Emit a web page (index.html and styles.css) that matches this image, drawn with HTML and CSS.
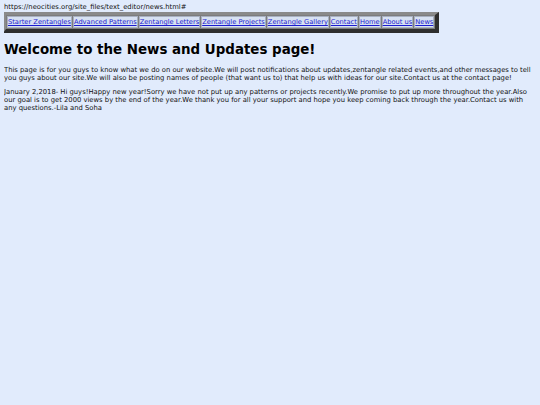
FILE: index.html
```html
<!DOCTYPE html>
<html>
<head>
<meta charset="utf-8">
<link rel="stylesheet" href="styles.css">
</head>
<body>
<div class="url">https://neocities.org/site_files/text_editor/news.html#</div>
<table class="nav">
<tr>
<td><a href="#">Starter Zentangles</a></td>
<td><a href="#">Advanced Patterns</a></td>
<td><a href="#">Zentangle Letters</a></td>
<td><a href="#">Zentangle Projects</a></td>
<td><a href="#">Zentangle Gallery</a></td>
<td><a href="#">Contact</a></td>
<td><a href="#">Home</a></td>
<td><a href="#">About us</a></td>
<td><a href="#">News</a></td>
</tr>
</table>
<h1 class="title">Welcome to the News and Updates page!</h1>
<p class="text">This page is for you guys to know what we do on our website.We will post notifications about updates,zentangle related events,and other messages to tell you guys about our site.We will also be posting names of people (that want us to) that help us with ideas for our site.Contact us at the contact page!</p>
<p class="text">January 2,2018- Hi guys!Happy new year!Sorry we have not put up any patterns or projects recently.We promise to put up more throughout the year.Also our goal is to get 2000 views by the end of the year.We thank you for all your support and hope you keep coming back through the year.Contact us with any questions.-Lila and Soha</p>
</body>
</html>
```
FILE: styles.css
```css
html, body {
  background: #e1ebfc;
}
body {
  margin: 3px 4px;
  font-family: "DejaVu Sans", Verdana, sans-serif;
  font-size: 6.8px;
  color: #111;
}
.url {
  line-height: 8px;
}
.nav {
  border-collapse: separate;
  border-spacing: 1px;
  border-style: solid;
  border-width: 3px 4px 4px 3px;
  border-color: #8a8a8a #2e2e2e #2e2e2e #8a8a8a;
  background: #7c7c7c;
  margin-left: -1px;
  margin-top: 1px;
  font-size: 6.7px;
}
.nav td {
  background: #d7e1f2;
  border: 1px solid #a8b0c0;
  padding: 1px 0;
  white-space: nowrap;
  line-height: 8px;
}
.nav a {
  color: #1a1ad0;
}
.title {
  font-size: 13.4px;
  font-weight: bold;
  margin: 8px 0 8px 0;
  line-height: 17px;
  color: #000;
}
.text {
  margin: 0 0 6px 0;
  line-height: 8px;
}
```
